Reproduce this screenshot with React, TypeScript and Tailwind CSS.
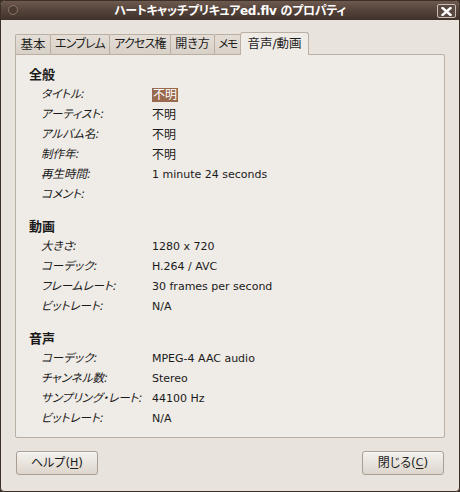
import React from "react";

const FONT = "font-['DejaVu_Sans','Noto_Sans_CJK_JP',sans-serif] [font-feature-settings:'palt']";

type Row = { label: string; value: string; selected?: boolean; latin?: boolean };

const sections: { title: string; rows: Row[] }[] = [
  {
    title: "全般",
    rows: [
      { label: "タイトル:", value: "不明", selected: true },
      { label: "アーティスト:", value: "不明" },
      { label: "アルバム名:", value: "不明" },
      { label: "制作年:", value: "不明" },
      { label: "再生時間:", value: "1 minute 24 seconds", latin: true },
      { label: "コメント:", value: "" },
    ],
  },
  {
    title: "動画",
    rows: [
      { label: "大きさ:", value: "1280 x 720", latin: true },
      { label: "コーデック:", value: "H.264 / AVC", latin: true },
      { label: "フレームレート:", value: "30 frames per second", latin: true },
      { label: "ビットレート:", value: "N/A", latin: true },
    ],
  },
  {
    title: "音声",
    rows: [
      { label: "コーデック:", value: "MPEG-4 AAC audio", latin: true },
      { label: "チャンネル数:", value: "Stereo", latin: true },
      { label: "サンプリング・レート:", value: "44100 Hz", latin: true },
      { label: "ビットレート:", value: "N/A", latin: true },
    ],
  },
];

const tabs: { t: string; w: string }[] = [
  { t: "基本", w: "w-[36px] text-[12.5px]" },
  { t: "エンブレム", w: "w-[60px] text-[12px] tracking-[-0.8px]" },
  { t: "アクセス権", w: "w-[62px] text-[12px] tracking-[-0.8px]" },
  { t: "開き方", w: "w-[45px] text-[12px]" },
  { t: "メモ", w: "w-[27px] text-[11.5px] tracking-[-1.5px]" },
];

function Btn({ label, mnemonic }: { label: string; mnemonic: string }) {
  return (
    <button className="w-[82px] h-[24px] rounded-[3px] border border-[#a89e93] bg-gradient-to-b from-[#f4f1ed] to-[#ddd6cd] text-[12px] text-[#1c1c1c] flex items-center justify-center shadow-[inset_0_1px_0_#fbfaf8]">
      {label}(<span className="underline underline-offset-2 text-[11px]">{mnemonic}</span>)
    </button>
  );
}

export default function App() {
  return (
    <div className={`w-[460px] h-[492px] bg-[#3a2e27] ${FONT}`}>
      <div className="w-[460px] h-[492px] flex flex-col rounded-t-[5px] rounded-b-[4px] border border-[#3c2f27] overflow-hidden bg-[#e8e3dd]">
        {/* title bar */}
        <div className="h-[19px] shrink-0 bg-gradient-to-b from-[#6d594e] via-[#54433a] to-[#3f322b] flex items-center relative">
          <div className="absolute left-[7px] top-[4px] w-[10px] h-[10px] rounded-full border border-[#8a7669] bg-[#4b3c33]" />
          <div className="flex-1 text-center text-white font-bold text-[12px] tracking-[-0.3px] leading-none pt-[1px]">
            ハートキャッチプリキュアed.flv のプロパティ
          </div>
          <div className="absolute right-[3px] top-[3px] w-[19px] h-[14px] rounded-[2px] border border-[#c9beb6] bg-[#5a4940] flex items-center justify-center">
            <svg width="11" height="9" viewBox="0 0 11 9">
              <path d="M1.5 1 L9.5 8 M9.5 1 L1.5 8" stroke="white" strokeWidth="2.4" strokeLinecap="square" />
            </svg>
          </div>
        </div>

        {/* body */}
        <div className="flex-1 flex flex-col px-[14px] pt-[12px] pb-[15px]">
          {/* tabs */}
          <div className="flex items-end h-[22px] relative z-10">
            {tabs.map((t) => (
              <div
                key={t.t}
                className={`${t.w} h-[20px] whitespace-nowrap text-center border border-b-0 border-[#b9afa3] -ml-px first:ml-0 bg-gradient-to-b from-[#e4ded6] to-[#d8d1c8] leading-[19px] text-[#1e1e1e] rounded-t-[2px]`}
              >
                {t.t}
              </div>
            ))}
            <div className="w-[69px] h-[23px] -mb-px whitespace-nowrap text-center border border-b-0 border-[#b9afa3] -ml-px bg-[#efebe6] text-[12.5px] leading-[22px] text-[#1e1e1e] rounded-t-[3px]">
              音声/動画
            </div>
          </div>

          {/* panel */}
          <div className="h-[384px] border border-[#b9afa3] bg-[#efebe6] rounded-b-[2px] rounded-tr-[2px] pl-[13px] pt-[10px] text-[12px] text-[#1a1a1a]">
            {sections.map((s, i) => (
              <div key={s.title} className={i > 0 ? "mt-[12px]" : ""}>
                <div className="h-[20px] leading-[20px] font-bold text-[13px]">{s.title}</div>
                {s.rows.map((r, j) => (
                  <div key={j} className="h-[20px] flex items-center pl-[12px]">
                    <div className="w-[111px] italic text-[11.5px]">{r.label}</div>
                    <div className={r.latin ? "text-[11px]" : ""}>
                      {r.selected ? (
                        <span className="bg-[#9a6a4f] text-white px-[1px]">{r.value}</span>
                      ) : (
                        r.value
                      )}
                    </div>
                  </div>
                ))}
              </div>
            ))}
          </div>

          {/* buttons */}
          <div className="mt-[13px] flex justify-between pl-[1px] pr-[1px]">
            <Btn label="ヘルプ" mnemonic="H" />
            <Btn label="閉じる" mnemonic="C" />
          </div>
        </div>
      </div>
    </div>
  );
}
